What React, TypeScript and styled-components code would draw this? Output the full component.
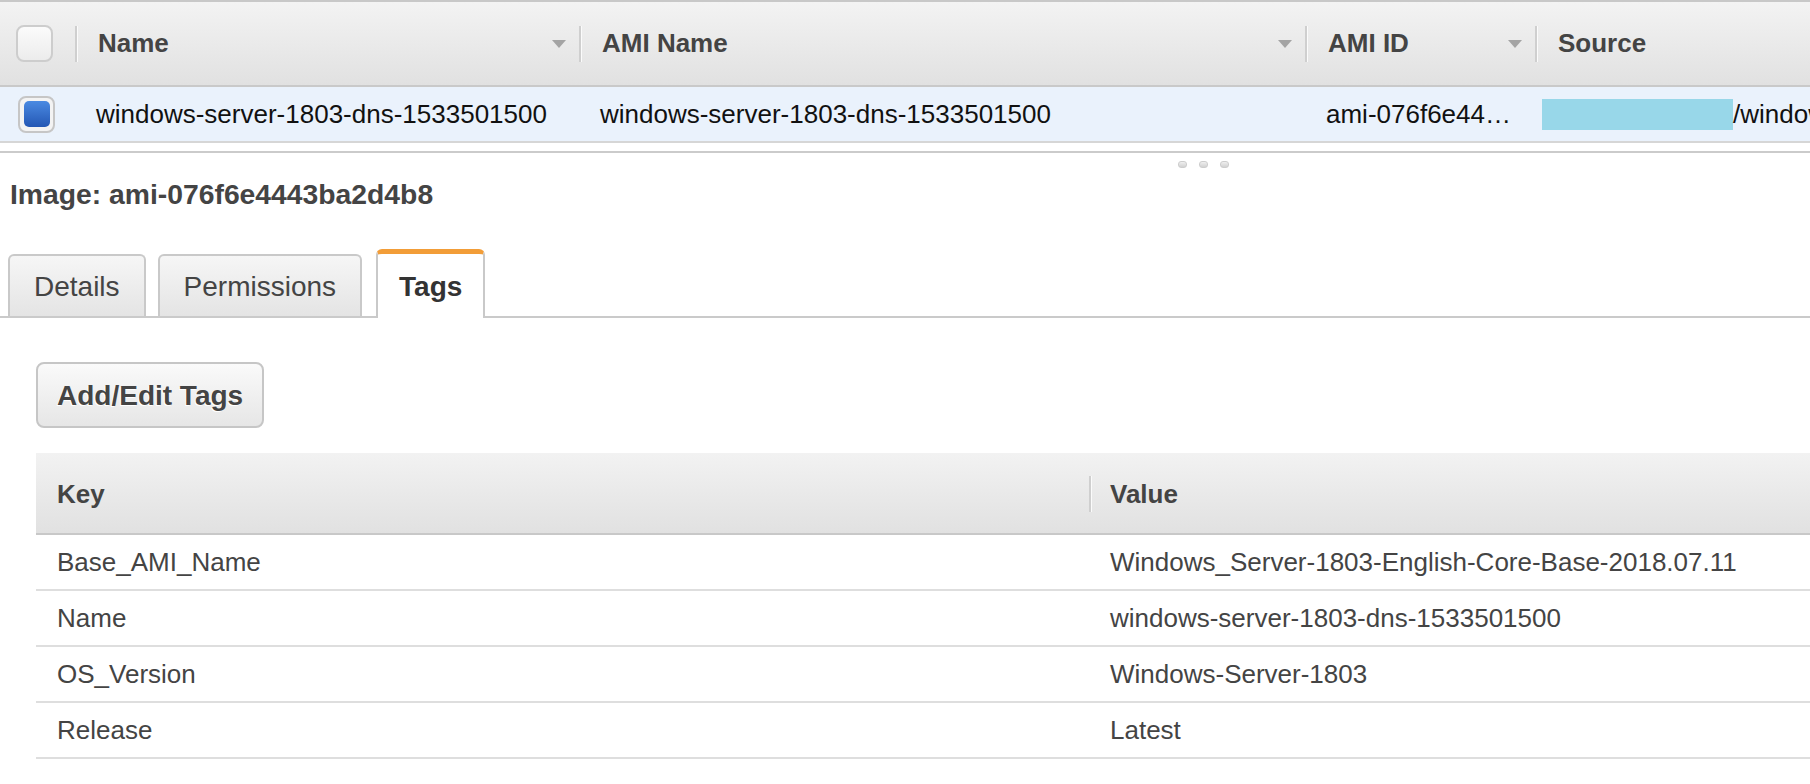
import React from "react";
import styled, { createGlobalStyle } from "styled-components";

const GlobalStyle = createGlobalStyle`
  html, body { margin: 0; padding: 0; background: #fff; }
  body { font-family: "Liberation Sans", Arial, Helvetica, sans-serif; overflow: hidden; }
  * { box-sizing: border-box; }
`;

const Page = styled.div`
  width: 1810px;
  height: 784px;
  overflow: hidden;
  background: #fff;
`;

const gridColumns = "75px 504px 726px 230px 275px";

const GridHeader = styled.div`
  display: grid;
  grid-template-columns: ${gridColumns};
  height: 87px;
  border-top: 2px solid #c8c8c8;
  border-bottom: 2px solid #c9c9c9;
  background: linear-gradient(#f3f3f3, #e1e1e1);
`;

const GridRow = styled.div`
  display: grid;
  grid-template-columns: ${gridColumns};
  height: 56px;
  background: #eaf2fc;
  border-bottom: 2px solid #d6d6d6;
`;

const CheckCell = styled.div<{ $pad: number }>`
  display: flex;
  align-items: center;
  padding-left: ${(p) => p.$pad}px;
`;

const HeaderCheckbox = styled.div`
  width: 37px;
  height: 37px;
  border: 2px solid #cdcdcd;
  border-radius: 8px;
  background: linear-gradient(#fbfbfb, #ececec);
`;

const RowCheckbox = styled.div`
  width: 37px;
  height: 37px;
  border: 2px solid #c6c6c6;
  border-radius: 8px;
  background: #f3f3f3;
  display: flex;
  align-items: center;
  justify-content: center;
`;

const CheckFill = styled.div`
  width: 26px;
  height: 26px;
  border-radius: 5px;
  background: linear-gradient(#4a8ae2, #2457b4);
`;

const HeadCell = styled.div`
  display: flex;
  align-items: center;
  min-width: 0;
  overflow: hidden;
`;

const Sep = styled.span`
  flex: none;
  width: 2px;
  height: 36px;
  background: #cfcfcf;
  box-shadow: 1px 0 0 #fbfbfb;
`;

const HeadLabel = styled.span<{ $gap: number }>`
  margin-left: ${(p) => p.$gap}px;
  font-size: 26px;
  font-weight: bold;
  color: #444;
  white-space: nowrap;
`;

const ArrowBox = styled.span`
  margin-left: auto;
  margin-right: 13px;
  display: flex;
  flex: none;
`;

const RowCell = styled.div<{ $pad?: number }>`
  display: flex;
  align-items: center;
  padding-left: ${(p) => p.$pad ?? 21}px;
  font-size: 26px;
  color: #111;
  white-space: nowrap;
  overflow: hidden;
  min-width: 0;
`;

const Redacted = styled.span`
  flex: none;
  width: 191px;
  height: 31px;
  background: #98d7e9;
`;

const Splitter = styled.div`
  margin-top: 8px;
  border-top: 2px solid #cbcbcb;
  padding: 8px 0 0 1178px;
  display: flex;
  gap: 12px;
`;

const Dot = styled.span`
  width: 9px;
  height: 7px;
  border-radius: 3px;
  background: linear-gradient(#efefef, #d2d2d2);
  border: 1px solid #cdcdcd;
`;

const Title = styled.h2`
  margin: 10px 0 0 10px;
  font-size: 28.3px;
  line-height: 32px;
  font-weight: bold;
  color: #444;
`;

const TabBar = styled.div`
  margin-top: 39px;
  display: flex;
  align-items: flex-end;
  gap: 12px;
  padding-left: 8px;
  height: 69px;
  border-bottom: 2px solid #cacaca;
`;

const Tab = styled.div<{ $active?: boolean }>`
  display: flex;
  align-items: center;
  justify-content: center;
  font-size: 28px;
  border: 2px solid #c9c9c9;
  border-bottom: none;
  border-radius: 6px 6px 0 0;
  ${(p) =>
    p.$active
      ? `
    height: 69px;
    margin-bottom: -2px;
    margin-left: 2px;
    padding: 2px 21px 0;
    border-top: 5px solid #f29d38;
    background: #fff;
    font-weight: bold;
    color: #333;
  `
      : `
    height: 62px;
    padding: 2px 24px 0;
    background: linear-gradient(#f6f6f6, #e4e4e4);
    color: #444;
  `}
`;

const Panel = styled.div`
  padding: 44px 0 0 36px;
`;

const Button = styled.button`
  display: block;
  height: 66px;
  padding: 2px 19px 0;
  font-family: inherit;
  font-size: 28px;
  font-weight: bold;
  color: #444;
  text-shadow: -1px 1px 0 #fff;
  border: 2px solid #c6c6c6;
  border-radius: 8px;
  background: linear-gradient(#fafafa, #e6e6e6);
  cursor: pointer;
`;

const TagTable = styled.div`
  margin-top: 25px;
`;

const tagColumns = "1053px 1fr";

const TagHeader = styled.div`
  display: grid;
  grid-template-columns: ${tagColumns};
  height: 82px;
  background: linear-gradient(#f2f2f2, #e1e1e1);
  border-bottom: 2px solid #c8c8c8;
`;

const TagHeadCell = styled.div<{ $pad?: number }>`
  display: flex;
  align-items: center;
  padding-top: 2px;
  padding-left: ${(p) => p.$pad ?? 0}px;
`;

const TagRow = styled.div`
  display: grid;
  grid-template-columns: ${tagColumns};
  height: 56px;
  border-bottom: 2px solid #dedede;
`;

const TagCell = styled.div`
  display: flex;
  align-items: center;
  padding-left: 21px;
  font-size: 26px;
  color: #444;
  white-space: nowrap;
`;

const SortArrow = () => (
  <ArrowBox>
    <svg width="14" height="8" viewBox="0 0 14 8">
      <path d="M0 0H14L7 8Z" fill="#a4a4a4" />
    </svg>
  </ArrowBox>
);

const tags: [string, string][] = [
  ["Base_AMI_Name", "Windows_Server-1803-English-Core-Base-2018.07.11"],
  ["Name", "windows-server-1803-dns-1533501500"],
  ["OS_Version", "Windows-Server-1803"],
  ["Release", "Latest"],
];

export default function App() {
  return (
    <Page>
      <GlobalStyle />
      <GridHeader>
        <CheckCell $pad={16}>
          <HeaderCheckbox />
        </CheckCell>
        <HeadCell>
          <Sep />
          <HeadLabel $gap={21}>Name</HeadLabel>
          <SortArrow />
        </HeadCell>
        <HeadCell>
          <Sep />
          <HeadLabel $gap={21}>AMI Name</HeadLabel>
          <SortArrow />
        </HeadCell>
        <HeadCell>
          <Sep />
          <HeadLabel $gap={21}>AMI ID</HeadLabel>
          <SortArrow />
        </HeadCell>
        <HeadCell>
          <Sep />
          <HeadLabel $gap={21}>Source</HeadLabel>
        </HeadCell>
      </GridHeader>
      <GridRow>
        <CheckCell $pad={18}>
          <RowCheckbox>
            <CheckFill />
          </RowCheckbox>
        </CheckCell>
        <RowCell>windows-server-1803-dns-1533501500</RowCell>
        <RowCell>windows-server-1803-dns-1533501500</RowCell>
        <RowCell>ami-076f6e44…</RowCell>
        <RowCell $pad={7}>
          <Redacted />
          /windows-server-1803-dns-1533501500
        </RowCell>
      </GridRow>
      <Splitter>
        <Dot />
        <Dot />
        <Dot />
      </Splitter>
      <Title>Image: ami-076f6e4443ba2d4b8</Title>
      <TabBar>
        <Tab>Details</Tab>
        <Tab>Permissions</Tab>
        <Tab $active>Tags</Tab>
      </TabBar>
      <Panel>
        <Button>Add/Edit Tags</Button>
        <TagTable>
          <TagHeader>
            <TagHeadCell $pad={21}>
              <HeadLabel $gap={0}>Key</HeadLabel>
            </TagHeadCell>
            <TagHeadCell>
              <Sep />
              <HeadLabel $gap={19}>Value</HeadLabel>
            </TagHeadCell>
          </TagHeader>
          {tags.map(([k, v]) => (
            <TagRow key={k}>
              <TagCell>{k}</TagCell>
              <TagCell>{v}</TagCell>
            </TagRow>
          ))}
        </TagTable>
      </Panel>
    </Page>
  );
}
